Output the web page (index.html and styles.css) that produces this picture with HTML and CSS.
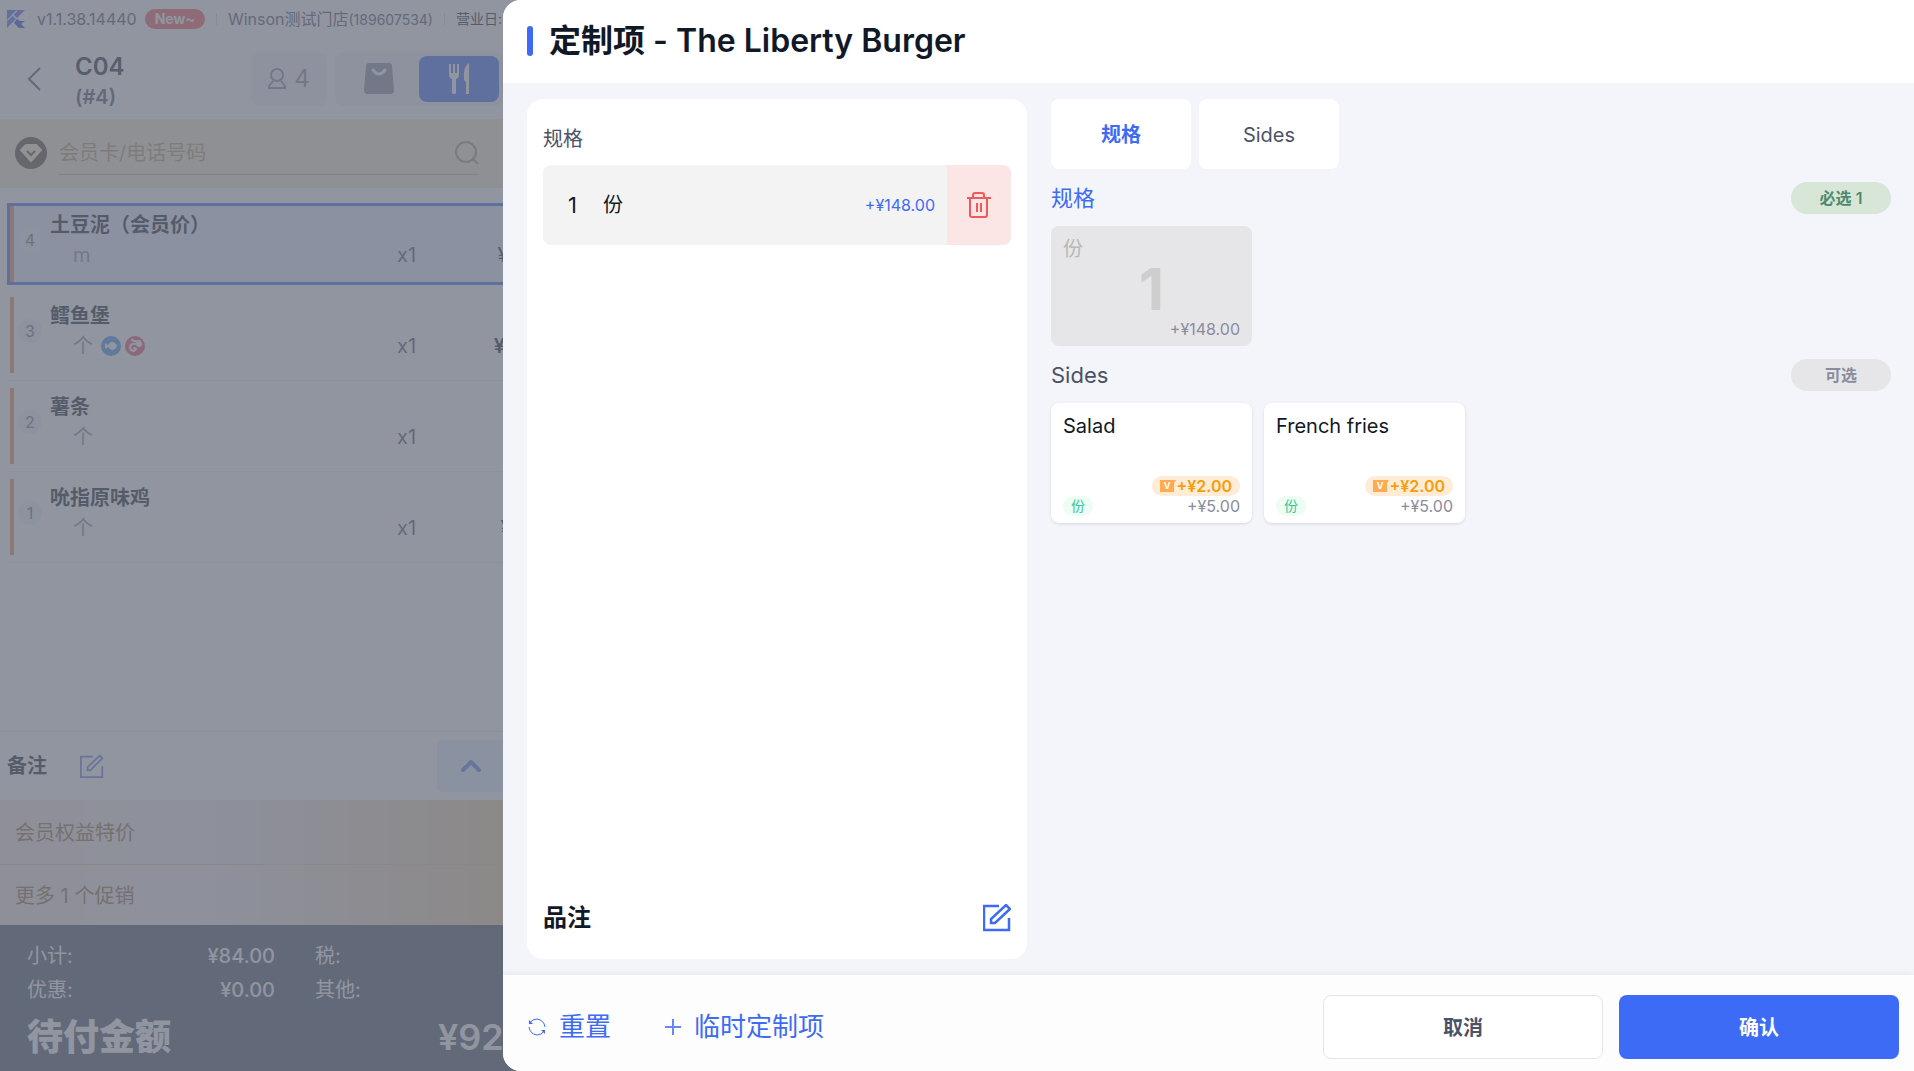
FILE: index.html
```html
<!DOCTYPE html>
<html lang="zh-CN">
<head>
<meta charset="UTF-8">
<meta name="viewport" content="width=device-width, initial-scale=1">
<title>定制项 - The Liberty Burger</title>
<link rel="stylesheet" href="styles.css">
</head>
<body>
  <main class="order">
    <div class="status-bar">
      <svg class="logo" width="18" height="18" viewBox="0 0 18 18">
        <path d="M0 0h9L0 10z" fill="#4a6bf0"/>
        <path d="M10 0h8l-8 8-4-4z" fill="#6a5cf0"/>
        <path d="M0 11l5-6 4 4-9 9z" fill="#5a78ff"/>
        <path d="M10 9l3 2h5l-4 3 4 4h-6l-5-5z" fill="#3a44d8"/>
        <path d="M1 10L10 1M5 4l5 5" stroke="#fff" stroke-width="1"/>
      </svg>
      <span class="version">v1.1.38.14440</span>
      <span class="new-tag">New~</span>
      <span class="divider"></span>
      <span class="store">Winson测试门店<small>(189607534)</small></span>
      <span class="divider"></span>
      <span class="day">营业日:</span>
    </div>

    <header class="order-header">
      <button class="back" aria-label="返回">
        <svg width="14" height="24" viewBox="0 0 14 24" fill="none" stroke="#4b5268" stroke-width="2"><path d="M13 1L2 12l11 11"/></svg>
      </button>
      <div class="table-name">
        <strong>C04</strong>
        <span>(#4)</span>
      </div>
      <button class="guests">
        <svg width="18" height="22" viewBox="0 0 18 22" fill="none" stroke="currentColor" stroke-width="2"><circle cx="9" cy="7" r="6"/><path d="M5 13L1 18v2h16v-2l-4-5"/></svg>
        4
      </button>
      <div class="mode">
        <button class="mode-btn" aria-label="外带">
          <svg width="30" height="32" viewBox="0 0 30 32"><path d="M5 0h20q3 0 3 3l2 24q0 4-4 4H4q-4 0-4-4L2 3q0-3 3-3z" fill="#8b8b9e"/><path d="M9 7q6 8 12 0" fill="none" stroke="#fff" stroke-width="3" stroke-linecap="round"/></svg>
        </button>
        <button class="mode-btn active" aria-label="堂食">
          <svg width="20" height="32" viewBox="0 0 20 32" fill="#fff"><path d="M0 1h2v9h2V1h2v9h2V1h2v11q0 3-3 4v14q0 1-2 1t-2-1V16q-3-1-3-4z"/><path d="M20 0v31h-3V19l-2-2q-1-14 5-17z"/></svg>
        </button>
      </div>
    </header>

    <div class="member">
      <svg width="32" height="32" viewBox="0 0 32 32"><circle cx="16" cy="16" r="16" fill="#5a4630"/><path d="M11 8h10l5 5-10 11L6 13z" fill="#fff2d0" stroke="#fff2d0" stroke-width="2" stroke-linejoin="round"/><path d="M12 14l4 4 4-4" fill="none" stroke="#5a4630" stroke-width="2"/></svg>
      <label class="member-field">
        <input type="text" placeholder="会员卡/电话号码" aria-label="会员卡/电话号码">
        <svg width="24" height="24" viewBox="0 0 24 24" fill="none" stroke="#b09468" stroke-width="2"><circle cx="11" cy="11" r="10"/><path d="M18 18l5 5"/></svg>
      </label>
    </div>

    <ul class="items">
      <li class="item selected">
        <span class="no">4</span>
        <div class="info">
          <strong>土豆泥（会员价）</strong>
          <div class="line"><span class="unit">m</span><span class="qty">x1</span><span class="price">¥18.00</span></div>
        </div>
      </li>
      <li class="item">
        <span class="no">3</span>
        <div class="info">
          <strong>鳕鱼堡</strong>
          <div class="line">
            <span class="unit">个
              <svg width="20" height="20" viewBox="0 0 20 20"><circle cx="10" cy="10" r="10" fill="#3c93e6"/><path d="M4 7l3 2q3-4 5-3 4 2 4 4t-4 4q-2 1-5-3l-3 2z" fill="#fff"/></svg>
              <svg width="20" height="20" viewBox="0 0 20 20"><circle cx="10" cy="10" r="10" fill="#e85068"/><path d="M7 4q4 2 8 1M15 8h-4q-5-1-6 3 0 4 4 4l2-2-2-1" fill="none" stroke="#fff" stroke-width="2" stroke-linecap="round"/><circle cx="14" cy="8" r="3" fill="#fff"/></svg>
            </span>
            <span class="qty">x1</span><span class="price bold">¥28.00</span>
          </div>
        </div>
      </li>
      <li class="item">
        <span class="no">2</span>
        <div class="info">
          <strong>薯条</strong>
          <div class="line"><span class="unit">个</span><span class="qty">x1</span><span class="price">¥8.00</span></div>
        </div>
      </li>
      <li class="item">
        <span class="no">1</span>
        <div class="info">
          <strong>吮指原味鸡</strong>
          <div class="line"><span class="unit">个</span><span class="qty">x1</span><span class="price">¥18.00</span></div>
        </div>
      </li>
    </ul>

    <div class="remark">
      <strong>备注</strong>
      <button class="icon-btn" aria-label="编辑备注">
        <svg width="24" height="24" viewBox="0 0 28 28" fill="none" stroke="#5c7cf0" stroke-width="2"><path d="M15 3H1v24h25V14M9 19v-4L23 2l3 3-14 14z"/></svg>
      </button>
      <button class="expand" aria-label="展开">
        <svg width="20" height="12" viewBox="0 0 20 12" fill="none" stroke="#5c7cf0" stroke-width="4" stroke-linecap="round"><path d="M2 10l8-8 8 8"/></svg>
      </button>
    </div>

    <div class="promos">
      <div class="promo">会员权益特价</div>
      <div class="promo">更多 1 个促销</div>
    </div>

    <div class="totals">
      <dl class="sums">
        <dt>小计:</dt><dd>¥84.00</dd><dt>税:</dt>
        <dt>优惠:</dt><dd>¥0.00</dd><dt>其他:</dt>
      </dl>
      <div class="due"><strong>待付金额</strong><span>¥92</span></div>
    </div>
  </main>

  <div class="mask"></div>

  <section class="drawer" role="dialog" aria-labelledby="drawer-title">
    <header class="drawer-header">
      <h1 id="drawer-title">定制项 - The Liberty Burger</h1>
    </header>

    <div class="drawer-body">
      <div class="chosen">
        <h2>规格</h2>
        <div class="chosen-row">
          <span class="count">1</span>
          <span class="name">份</span>
          <span class="extra">+¥148.00</span>
          <button class="delete" aria-label="删除">
            <svg width="26" height="26" viewBox="0 0 26 26" fill="none" stroke="#f05a5a" stroke-width="2"><path d="M1 6h24M7 6V3q0-2 2-2h7q2 0 2 2v3M4 6v17q0 2 2 2h13q2 0 2-2V6M11 11v9M15 11v9"/></svg>
          </button>
        </div>
        <div class="note">
          <strong>品注</strong>
          <button class="icon-btn" aria-label="编辑品注">
            <svg width="28" height="28" viewBox="0 0 28 28" fill="none" stroke="#3d6bf6" stroke-width="2.500"><path d="M16 2H1v24h25V14M8 19v-4L23 1l4 4-15 14z"/></svg>
          </button>
        </div>
      </div>

      <div class="options">
        <nav class="tabs">
          <button class="tab active">规格</button>
          <button class="tab">Sides</button>
        </nav>

        <div class="group-head current">
          <h2>规格</h2>
          <span class="pill required">必选 1</span>
        </div>
        <div class="cards">
          <button class="card" disabled>
            <span class="card-name">份</span>
            <span class="picked">1</span>
            <span class="prices"><span>+¥148.00</span></span>
          </button>
        </div>

        <div class="group-head">
          <h2>Sides</h2>
          <span class="pill">可选</span>
        </div>
        <div class="cards">
          <button class="card">
            <span class="card-name">Salad</span>
            <span class="card-unit">份</span>
            <span class="prices">
              <span class="vip"><svg width="16" height="12" viewBox="0 0 16 12"><path d="M0 0h16l-2 3v9H0z" fill="#ffab52"/><text x="7" y="9" text-anchor="middle">V</text></svg>+¥2.00</span>
              <span>+¥5.00</span>
            </span>
          </button>
          <button class="card">
            <span class="card-name">French fries</span>
            <span class="card-unit">份</span>
            <span class="prices">
              <span class="vip"><svg width="16" height="12" viewBox="0 0 16 12"><path d="M0 0h16l-2 3v9H0z" fill="#ffab52"/><text x="7" y="9" text-anchor="middle">V</text></svg>+¥2.00</span>
              <span>+¥5.00</span>
            </span>
          </button>
        </div>
      </div>
    </div>

    <footer class="drawer-footer">
      <button class="link-btn">
        <svg width="18" height="18" viewBox="0 0 18 18" fill="none" stroke="currentColor"><path d="M2 5q2-4 7-4 7 1 8 8M16 13q-2 4-7 4-7-1-8-8"/><path d="M1 2v4h4zM17 16v-4h-4z" fill="currentColor" stroke="none"/></svg>
        重置
      </button>
      <button class="link-btn">
        <svg width="16" height="16" viewBox="0 0 16 16" fill="none" stroke="currentColor" stroke-width="2" opacity="0.8"><path d="M8 0v16M0 8h16"/></svg>
        临时定制项
      </button>
      <button class="btn cancel">取消</button>
      <button class="btn confirm">确认</button>
    </footer>
  </section>
</body>
</html>
```
FILE: styles.css
```css
* {
  margin: 0;
  padding: 0;
  box-sizing: border-box;
}

body {
  height: 100vh;
  overflow: hidden;
  position: relative;
  background: #fff;
  color: #111827;
  font-family: Inter, "Noto Sans CJK SC", sans-serif;
  font-size: 20px;
  line-height: 28px;
}

button, input {
  font: inherit;
  color: inherit;
  border: 0;
  background: none;
}

button {
  cursor: pointer;
}

svg {
  display: block;
  flex: none;
}

/* 左侧订单 */
.order {
  width: 600px;
  height: 100%;
  display: flex;
  flex-direction: column;
}

.status-bar {
  display: flex;
  align-items: center;
  height: 38px;
  padding-left: 7px;
  font-size: 16px;
  color: #4b5268;
  white-space: nowrap;
}

.version {
  margin-left: 12px;
}

.new-tag {
  margin-left: 8px;
  padding: 0 10px;
  border-radius: 10px;
  background: #f8585c;
  color: #fff;
  font-size: 14px;
  font-weight: 700;
  line-height: 20px;
}

.divider {
  width: 1px;
  height: 12px;
  margin: 0 11px;
  background: #d5d8e0;
}

.store small,
.day {
  font-size: 14px;
}

.day {
  color: #111827;
}

.order-header {
  display: flex;
  align-items: center;
  height: 81px;
  padding-left: 27px;
}

.back {
  width: 48px;
}

.table-name {
  width: 176px;
  padding-top: 6px;
  color: #4b5268;
}

.table-name strong,
.table-name span {
  display: block;
  font-size: 24px;
  font-weight: 600;
  line-height: 30px;
}

.table-name strong {
  color: #1c2434;
}

.table-name span {
  font-size: 20px;
}

.guests {
  display: flex;
  align-items: center;
  justify-content: center;
  gap: 8px;
  width: 76px;
  height: 54px;
  border-radius: 8px;
  background: #f3f4f6;
  color: #8b8b9e;
  font-size: 24px;
}

.mode {
  display: flex;
  margin-left: 8px;
  padding: 4px;
  border-radius: 8px;
  background: #f3f4f6;
}

.mode-btn {
  display: flex;
  align-items: center;
  justify-content: center;
  width: 80px;
  height: 46px;
  border-radius: 8px;
}

.mode-btn.active {
  background: #3d6bf6;
}

.member {
  display: flex;
  align-items: center;
  gap: 12px;
  height: 68px;
  padding-left: 15px;
  background: #f5ebd0;
}

.member-field {
  display: flex;
  align-items: center;
  width: 420px;
  height: 44px;
  border-bottom: 1px solid #d0b888;
}

.member-field input {
  flex: 1;
  outline: 0;
}

.member-field input::placeholder {
  color: #b89c6c;
}

.items {
  flex: 1;
  padding: 12px 7px 0;
  border-top: 1px solid #e5e7eb;
  list-style: none;
}

.item {
  display: flex;
  height: 91px;
  padding: 7px 0 7px 3px;
  border-bottom: 1px solid #e9ebf0;
}

.item.selected {
  height: 82px;
  margin: 3px 0 5px;
  padding: 0;
  border: 3px solid #3d6bf6;
  background: #ebf0ff;
}

.item::before {
  content: "";
  width: 4px;
  background: #f08c50;
}

.no {
  align-self: center;
  width: 24px;
  height: 24px;
  margin: 0 8px 8px 4px;
  border-radius: 50%;
  background: #f0f1f6;
  color: #6b7280;
  font-size: 16px;
  line-height: 24px;
  text-align: center;
}

.info {
  flex: 1;
  padding-top: 5px;
}

.info strong {
  display: block;
}

.line {
  display: flex;
  align-items: center;
  height: 32px;
  padding: 0 31px 0 23px;
  color: #4b5268;
}

.unit {
  display: flex;
  align-items: center;
  gap: 4px;
  width: 324px;
  color: #8b8b9e;
}

.unit svg:first-of-type {
  margin-left: 4px;
}

.price {
  margin-left: auto;
  color: #111827;
}

.price.bold {
  font-weight: 600;
}

.remark {
  display: flex;
  align-items: center;
  height: 69px;
  padding-left: 7px;
  border-top: 1px solid #e5e7eb;
}

.icon-btn {
  display: flex;
}

.remark .icon-btn {
  margin-left: 33px;
}

.expand {
  display: flex;
  align-items: center;
  justify-content: center;
  width: 68px;
  height: 52px;
  margin-left: 333px;
  border-radius: 4px;
  background: #e8eeff;
}

.promos {
  background: linear-gradient(90deg, #f5e6dc 0, #f5ecf0 200px, #eecb9c 520px);
  color: #907040;
}

.promo {
  height: 60px;
  padding: 1px 0 0 15px;
  line-height: 60px;
}

.promo:first-child {
  height: 65px;
  line-height: 64px;
  border-bottom: 1px solid #f0c898;
}

.totals {
  height: 146px;
  padding: 14px 27px 0;
  background: #485064;
  color: #fff;
}

.sums {
  display: grid;
  grid-template-columns: 100px 148px 100px;
  line-height: 34px;
}

.sums dd {
  text-align: right;
  font-weight: 500;
}

.sums dt:nth-of-type(even) {
  padding-left: 40px;
  white-space: nowrap;
}

.due {
  display: flex;
  gap: 267px;
  font-size: 36px;
  font-weight: 600;
  line-height: 60px;
}

.mask {
  position: absolute;
  inset: 0;
  background: rgba(107, 114, 128, 0.75);
}

/* 定制项抽屉 */
.drawer {
  position: absolute;
  inset: 0 0 0 503px;
  display: flex;
  flex-direction: column;
  overflow: hidden;
  border-radius: 18px 0 0 18px;
  background: #f4f5fb;
}

.drawer-header {
  display: flex;
  align-items: center;
  height: 83px;
  padding: 0 24px 2px;
  background: #fff;
}

.drawer-header h1 {
  display: flex;
  align-items: center;
  gap: 16px;
  font-size: 32px;
  font-weight: 600;
  line-height: 40px;
}

.drawer-header h1::before {
  content: "";
  width: 6px;
  height: 30px;
  border-radius: 3px;
  background: #3d6bf6;
}

.drawer-body {
  flex: 1;
  display: flex;
  gap: 24px;
  padding: 16px 23px 16px 24px;
}

.chosen {
  display: flex;
  flex-direction: column;
  width: 500px;
  padding: 25px 16px 24px;
  border-radius: 16px;
  background: #fff;
}

.chosen h2 {
  margin-bottom: 11px;
  color: #4b5268;
  font-size: 20px;
  font-weight: 400;
  line-height: 30px;
}

.chosen-row {
  display: flex;
  align-items: center;
  height: 80px;
  padding-left: 25px;
  border-radius: 8px;
  overflow: hidden;
  background: #f3f3f3;
}

.count {
  width: 35px;
  font-size: 22px;
}

.extra {
  margin-left: auto;
  padding-right: 12px;
  color: #3d6bf6;
  font-size: 16px;
}

.delete {
  display: flex;
  align-items: center;
  justify-content: center;
  width: 64px;
  height: 80px;
  background: #fbe6e5;
}

.note {
  display: flex;
  align-items: center;
  justify-content: space-between;
  margin-top: auto;
  font-size: 24px;
  line-height: 34px;
}

.options {
  flex: 1;
}

.tabs {
  display: flex;
  gap: 8px;
}

.tab {
  width: 140px;
  height: 70px;
  padding-top: 2px;
  border-radius: 8px;
  background: #fff;
  color: #4b5268;
}

.tab.active {
  color: #3d6bf6;
  font-weight: 700;
}

.group-head {
  display: flex;
  align-items: center;
  justify-content: space-between;
  height: 57px;
  color: #4b5268;
}

.group-head h2 {
  font-size: 22px;
  font-weight: 400;
}

.group-head.current h2 {
  color: #3d6bf6;
}

.pill {
  width: 100px;
  border-radius: 16px;
  background: #e6e6e8;
  color: #8b8b9e;
  font-size: 16px;
  font-weight: 600;
  line-height: 32px;
  text-align: center;
}

.pill.required {
  background: #d8e6d8;
  color: #4f8a70;
}

.cards {
  display: flex;
  flex-wrap: wrap;
  gap: 12px;
}

.card {
  position: relative;
  display: flex;
  flex-wrap: wrap;
  align-items: flex-end;
  width: 201px;
  height: 120px;
  padding: 8px 12px 7px;
  border-radius: 8px;
  background: #fff;
  box-shadow: 0 1px 3px rgba(0, 0, 0, 0.12);
  text-align: left;
}

.card-name {
  width: 100%;
  align-self: flex-start;
  line-height: 30px;
}

.card:disabled {
  background: #e6e6e8;
  box-shadow: none;
  color: #b8b8b8;
}

.picked {
  position: absolute;
  inset: 0;
  color: #cecece;
  font-size: 58px;
  font-weight: 700;
  line-height: 126px;
  text-align: center;
}

.card-unit {
  padding: 0 8px;
  border-radius: 10px;
  background: #eefdf4;
  color: #34c89a;
  font-size: 14px;
  line-height: 20px;
}

.prices {
  display: flex;
  flex-direction: column;
  align-items: flex-end;
  margin-left: auto;
  color: #8b8b9e;
  font-size: 16px;
  line-height: 20px;
}

.vip {
  display: flex;
  align-items: center;
  padding: 0 8px;
  border-radius: 10px;
  background: #ffecd6;
  color: #f59e0b;
  font-weight: 600;
}

.vip text {
  fill: #fff;
  font-size: 9px;
  font-weight: 700;
}

.drawer-footer {
  display: flex;
  align-items: center;
  height: 96px;
  padding: 8px 15px 0 25px;
  background: #fdfdfd;
  box-shadow: 0 0 8px rgba(0, 0, 0, 0.08);
}

.link-btn {
  display: flex;
  align-items: center;
  gap: 13px;
  margin-right: 54px;
  color: #3d6bf6;
  font-size: 26px;
}

.btn {
  width: 280px;
  height: 64px;
  padding-top: 1px;
  border-radius: 8px;
  font-weight: 600;
}

.cancel {
  margin: 0 16px 0 auto;
  border: 1px solid #e6e6e8;
  background: #fff;
  color: #4b5268;
}

.confirm {
  background: #3d6bf6;
  color: #fff;
}
```
